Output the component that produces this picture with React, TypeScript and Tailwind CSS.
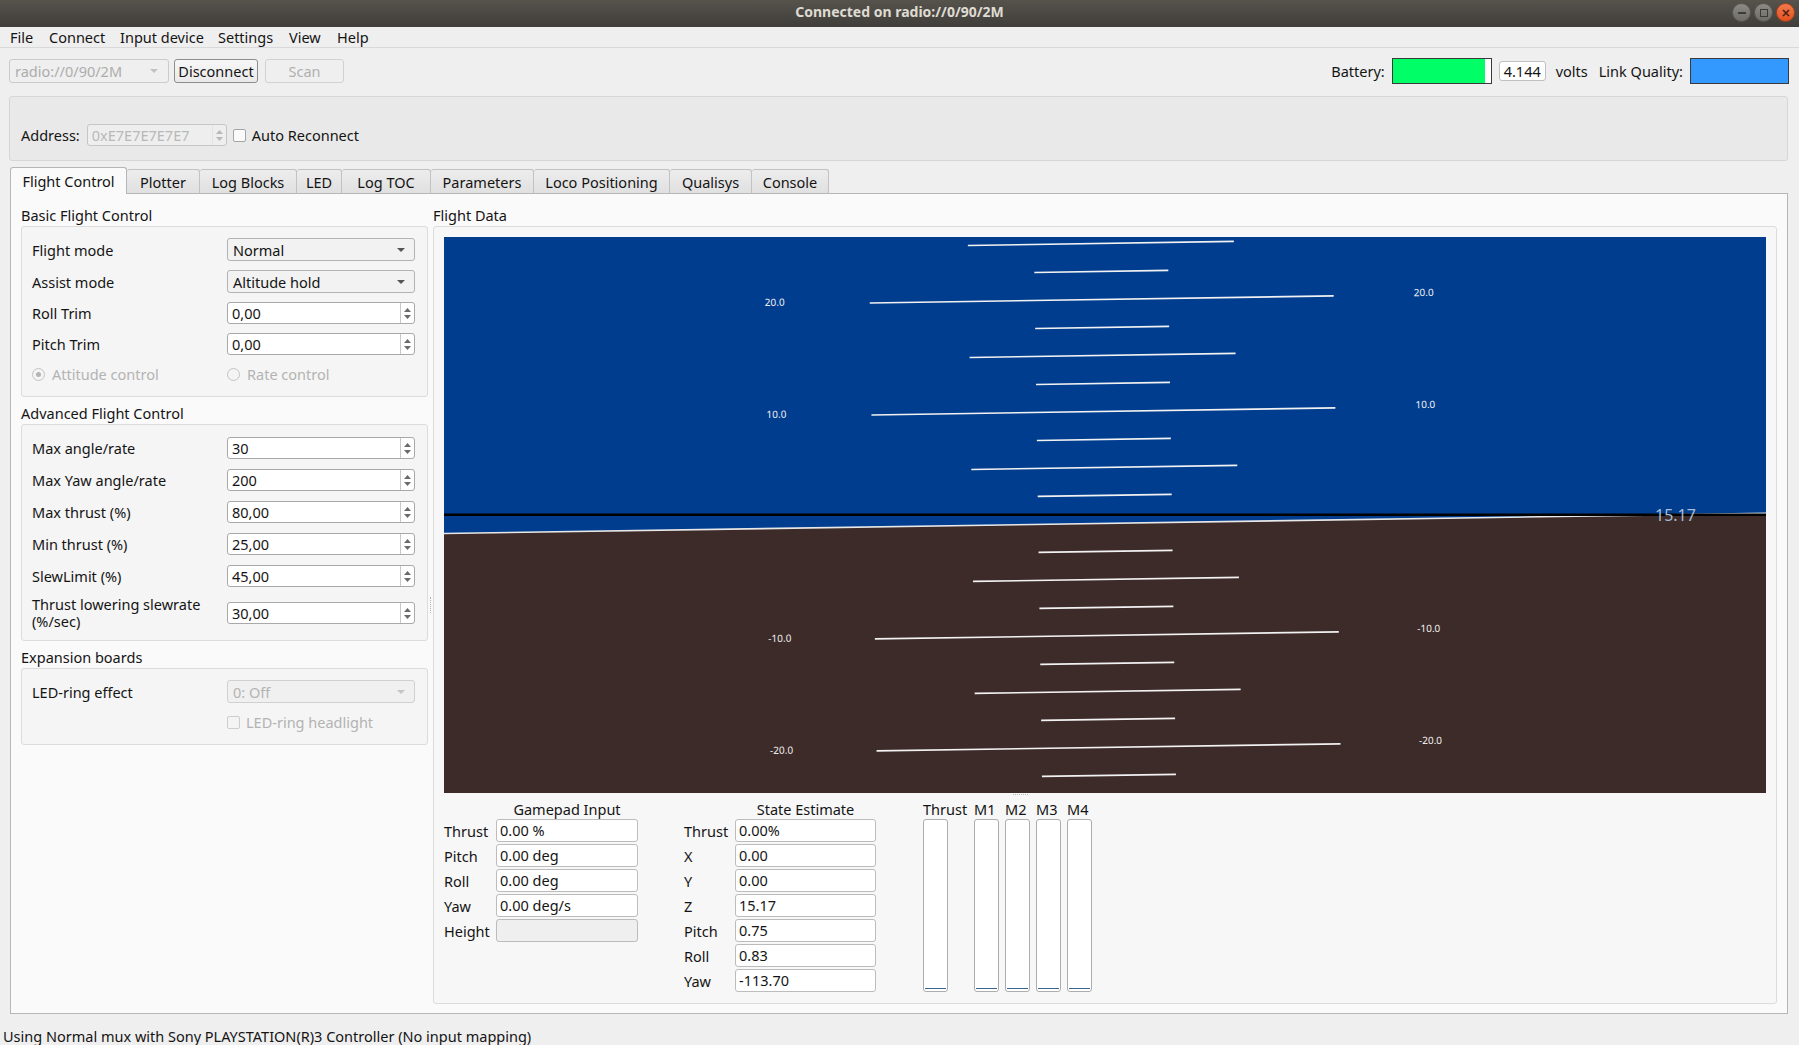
import React from 'react';

const Up = () => (
  <svg width="7" height="4" className="block">
    <path d="M0 4L3.5 0L7 4Z" fill="#6a6a6a" />
  </svg>
);
const Down = () => (
  <svg width="7" height="4" className="block">
    <path d="M0 0L7 0L3.5 4Z" fill="#6a6a6a" />
  </svg>
);

function Spin({ value }: { value: string }) {
  return (
    <div className="flex h-[22px] w-[188px] rounded-[3px] border border-[#a9a9a9] bg-white">
      <div className="flex-1 pl-[4px] leading-[20px]">{value}</div>
      <div className="flex w-[14px] flex-col items-center justify-center gap-[3px] border-l border-[#c8c8c8]">
        <Up />
        <Down />
      </div>
    </div>
  );
}

function Combo({ value, disabled }: { value: string; disabled?: boolean }) {
  return (
    <div
      className={
        disabled
          ? 'flex h-[23px] w-[188px] items-center rounded-[3px] border border-[#d0d0d0] bg-[#f0f0f0] pl-[5px] pr-[9px] text-[#b4b4b4]'
          : 'flex h-[23px] w-[188px] items-center rounded-[3px] border border-[#b3b3b3] bg-[#f2f2f2] pl-[5px] pr-[9px]'
      }
    >
      <span className="flex-1">{value}</span>
      <svg width="8" height="4" className="block">
        <path d="M0 0H8L4 4Z" fill={disabled ? '#c4c4c4' : '#555'} />
      </svg>
    </div>
  );
}

function Row({ label, children }: { label: React.ReactNode; children: React.ReactNode }) {
  return (
    <div className="flex items-center">
      <div className="w-[195px]">{label}</div>
      {children}
    </div>
  );
}

function Horizon() {
  const W = 1322;
  const H = 556;
  const cx = 661;
  const cy = 278;
  const hy = cy + 8.4;
  const ppd = 11.2;
  const items: React.ReactNode[] = [];
  for (let i = -12; i <= 12; i++) {
    const d = i * 2.5;
    if (i === 0) continue;
    const y = hy - d * ppd;
    const long = i % 4 === 0;
    const mid = !long && i % 2 === 0;
    const hw = long ? 232 : mid ? 133 : 67;
    items.push(
      <line key={'l' + i} x1={cx - hw} x2={cx + hw} y1={y} y2={y} stroke="#f2f2f2" strokeWidth="1.6" />
    );
    if (long) {
      const t = d.toFixed(1);
      items.push(
        <text key={'a' + i} x={cx - 327} y={y + 1.5} fill="#f0f0f0" fontSize="10" textAnchor="middle">
          {t}
        </text>,
        <text key={'b' + i} x={cx + 322} y={y + 1.5} fill="#f0f0f0" fontSize="10" textAnchor="middle">
          {t}
        </text>
      );
    }
  }
  return (
    <svg width={W} height={H} className="block font-['Noto_Sans',sans-serif]">
      <defs>
        <clipPath id="hc">
          <rect width={W} height={H} />
        </clipPath>
      </defs>
      <g clipPath="url(#hc)">
        <g transform={`rotate(-0.87 ${cx} ${cy})`}>
          <rect x={-300} y={-400} width={W + 600} height={hy + 400} fill="#003d8f" />
          <rect x={-300} y={hy} width={W + 600} height={H + 400} fill="#3d2b29" />
          <line x1={-300} x2={W + 300} y1={hy} y2={hy} stroke="#e8e8e8" strokeWidth="1.6" />
          {items}
        </g>
        <rect x={0} y={cy - 1.5} width={W} height={2.5} fill="#000" />
        <text x={1211} y={cy + 6} fill="#a9bcd6" fontSize="16">
          15.17
        </text>
      </g>
    </svg>
  );
}

function Field({ value, disabled }: { value: string; disabled?: boolean }) {
  return (
    <div
      className={
        disabled
          ? 'h-[23px] w-full rounded-[3px] border border-[#bcbcbc] bg-[#efefef]'
          : 'h-[23px] w-full rounded-[3px] border border-[#bcbcbc] bg-white pl-[3px] leading-[21px]'
      }
    >
      {value}
    </div>
  );
}

function DataGroup({ title, rows, labelW }: { title: string; rows: [string, string, boolean?][]; labelW: string }) {
  return (
    <div className="flex flex-col">
      <div className="flex h-[18px] items-center">
        <div className={labelW}></div>
        <div className="flex-1 text-center">{title}</div>
      </div>
      <div className="mt-[1px] flex flex-col gap-[2px]">
        {rows.map(([l, v, dis]) => (
          <div key={l} className="flex items-center">
            <div className={labelW}>{l}</div>
            <div className="flex-1">
              <Field value={v} disabled={dis} />
            </div>
          </div>
        ))}
      </div>
    </div>
  );
}

function Bar() {
  return (
    <div className="flex h-[173px] w-[25px] flex-col justify-end rounded-[3px] border border-[#adadad] bg-white px-[1px] pb-[2px]">
      <div className="h-[1px] bg-[#3a6790]"></div>
    </div>
  );
}

const tabs: [string, string][] = [
  ['Flight Control', 'w-[117px]'],
  ['Plotter', 'w-[73px]'],
  ['Log Blocks', 'w-[97px]'],
  ['LED', 'w-[45px]'],
  ['Log TOC', 'w-[89px]'],
  ['Parameters', 'w-[103px]'],
  ['Loco Positioning', 'w-[136px]'],
  ['Qualisys', 'w-[82px]'],
  ['Console', 'w-[77px]'],
];

export default function App() {
  return (
    <div className="flex h-[1045px] w-[1799px] flex-col overflow-hidden bg-[#efefef] font-['Noto_Sans','DejaVu_Sans',sans-serif] text-[14.5px] leading-[18px] text-[#141414]">
      {/* title bar */}
      <div className="relative flex h-[27px] items-center justify-center bg-gradient-to-b from-[#56534d] to-[#403e3a] pb-[3px]">
        <span className="text-[14px] font-bold text-[#dfdbd2]">Connected on radio://0/90/2M</span>
        <div className="absolute right-[4px] top-[3px] flex gap-[3px]">
          <div className="flex h-[19px] w-[19px] items-center justify-center rounded-full border border-[#5a5853] bg-gradient-to-b from-[#8c8a85] to-[#6e6c67]">
            <div className="h-[2px] w-[8px] bg-[#3c3b37]"></div>
          </div>
          <div className="flex h-[19px] w-[19px] items-center justify-center rounded-full border border-[#5a5853] bg-gradient-to-b from-[#8c8a85] to-[#6e6c67]">
            <div className="h-[8px] w-[8px] border-[1.5px] border-[#3c3b37]"></div>
          </div>
          <div className="flex h-[19px] w-[19px] items-center justify-center rounded-full border border-[#a8401c] bg-gradient-to-b from-[#f47a4c] to-[#e2501e]">
            <svg width="8" height="8" className="block">
              <path d="M1 1L7 7M7 1L1 7" stroke="#4a2212" strokeWidth="1.6" />
            </svg>
          </div>
        </div>
      </div>

      {/* menu bar */}
      <div className="flex h-[21px] items-center border-b border-[#d9d9d9] pl-[10px]">
        <span className="w-[39px]">File</span>
        <span className="w-[71px]">Connect</span>
        <span className="w-[98px]">Input device</span>
        <span className="w-[71px]">Settings</span>
        <span className="w-[48px]">View</span>
        <span>Help</span>
      </div>

      {/* toolbar */}
      <div className="mt-[10px] flex h-[26px] items-center pl-[9px] pr-[10px]">
        <div className="flex h-[24px] w-[160px] items-center rounded-[3px] border border-[#cbcbcb] bg-[#efefef] pl-[5px] pr-[10px] text-[#adadad]">
          <span className="flex-1">radio://0/90/2M</span>
          <svg width="8" height="4" className="block">
            <path d="M0 0H8L4 4Z" fill="#c2c2c2" />
          </svg>
        </div>
        <div className="ml-[5px] flex h-[24px] w-[84px] items-center justify-center rounded-[3px] border border-[#8d8d8d] bg-gradient-to-b from-[#f7f7f7] to-[#e9e9e9]">
          Disconnect
        </div>
        <div className="ml-[7px] flex h-[24px] w-[79px] items-center justify-center rounded-[3px] border border-[#d2d2d2] bg-[#efefef] text-[#b0b0b0]">
          Scan
        </div>
        <div className="flex-1"></div>
        <span>Battery:</span>
        <div className="ml-[7px] flex h-[26px] w-[100px] border border-[#3a3a3a] bg-white">
          <div className="h-full w-[92px] bg-[#00ff66]"></div>
        </div>
        <div className="ml-[7px] flex h-[20px] w-[47px] items-center justify-center rounded-[3px] border border-[#c0c0c0] bg-white">
          4.144
        </div>
        <span className="ml-[10px]">volts</span>
        <span className="ml-[11px]">Link Quality:</span>
        <div className="ml-[7px] h-[26px] w-[99px] border border-[#3a3a3a] bg-[#3399ff]"></div>
      </div>

      {/* address group */}
      <div className="ml-[9px] mr-[11px] mt-[12px] flex h-[65px] items-end rounded-[3px] border border-[#d6d6d6] bg-[#e9e9e9] pb-[14px] pl-[11px]">
        <div className="flex items-center">
          <span>Address:</span>
          <div className="ml-[7px] flex h-[22px] w-[140px] rounded-[3px] border border-[#c6c6c6] bg-[#eeeeee] text-[#b8b8b8]">
            <div className="flex-1 pl-[4px] leading-[20px]">0xE7E7E7E7E7</div>
            <div className="flex w-[14px] flex-col items-center justify-center gap-[3px] border-l border-[#d4d4d4] opacity-40">
              <Up />
              <Down />
            </div>
          </div>
          <div className="ml-[6px] h-[13px] w-[13px] rounded-[2px] border border-[#a5a5a5] bg-[#fafafa]"></div>
          <span className="ml-[6px]">Auto Reconnect</span>
        </div>
      </div>

      {/* tabs */}
      <div className="ml-[10px] mt-[8px] flex h-[24px] items-end">
        {tabs.map(([t, w], i) =>
          i === 0 ? (
            <div
              key={t}
              className={`relative z-10 -mb-[1px] flex h-[27px] items-center justify-center rounded-t-[3px] border border-b-0 border-[#b6b6b6] bg-[#fafafa] ${w}`}
            >
              {t}
            </div>
          ) : (
            <div
              key={t}
              className={`flex h-[24px] items-center justify-center rounded-t-[3px] border border-b-0 border-l-0 border-[#c2c2c2] bg-gradient-to-b from-[#ededed] to-[#e0e0e0] ${w}`}
            >
              {t}
            </div>
          )
        )}
      </div>

      {/* tab pane */}
      <div className="ml-[10px] mr-[11px] flex h-[821px] border border-[#b6b6b6] bg-[#fafafa] px-[10px] pt-[12px]">
        {/* left column */}
        <div className="flex w-[407px] flex-col">
          <div className="h-[18px]">Basic Flight Control</div>
          <div className="mt-[2px] flex h-[171px] flex-col gap-[9px] rounded-[3px] border border-[#dcdcdc] bg-[#f5f5f5] pl-[10px] pt-[11px]">
            <Row label="Flight mode">
              <Combo value="Normal" />
            </Row>
            <Row label="Assist mode">
              <Combo value="Altitude hold" />
            </Row>
            <Row label="Roll Trim">
              <Spin value="0,00" />
            </Row>
            <Row label="Pitch Trim">
              <Spin value="0,00" />
            </Row>
            <div className="flex h-[20px] items-center text-[#b3b3b3]">
              <div className="flex w-[195px] items-center">
                <div className="flex h-[13px] w-[13px] items-center justify-center rounded-full border border-[#c4c4c4] bg-[#f4f4f4]">
                  <div className="h-[5px] w-[5px] rounded-full bg-[#b4b4b4]"></div>
                </div>
                <span className="ml-[7px]">Attitude control</span>
              </div>
              <div className="h-[13px] w-[13px] rounded-full border border-[#c4c4c4] bg-[#f4f4f4]"></div>
              <span className="ml-[7px]">Rate control</span>
            </div>
          </div>

          <div className="mt-[7px] h-[18px]">Advanced Flight Control</div>
          <div className="mt-[2px] flex h-[217px] flex-col gap-[10px] rounded-[3px] border border-[#dcdcdc] bg-[#f5f5f5] pl-[10px] pt-[12px]">
            <Row label="Max angle/rate">
              <Spin value="30" />
            </Row>
            <Row label="Max Yaw angle/rate">
              <Spin value="200" />
            </Row>
            <Row label="Max thrust (%)">
              <Spin value="80,00" />
            </Row>
            <Row label="Min thrust (%)">
              <Spin value="25,00" />
            </Row>
            <Row label="SlewLimit (%)">
              <Spin value="45,00" />
            </Row>
            <div className="-mt-[1px] flex items-center">
              <div className="w-[195px] leading-[17px]">
                Thrust lowering slewrate
                <br />
                (%/sec)
              </div>
              <Spin value="30,00" />
            </div>
          </div>

          <div className="mt-[7px] h-[18px]">Expansion boards</div>
          <div className="mt-[2px] flex h-[77px] flex-col gap-[9px] rounded-[3px] border border-[#dcdcdc] bg-[#f5f5f5] pl-[10px] pt-[11px]">
            <Row label="LED-ring effect">
              <Combo value="0: Off" disabled />
            </Row>
            <div className="flex h-[20px] items-center text-[#b3b3b3]">
              <div className="w-[195px]"></div>
              <div className="h-[13px] w-[13px] rounded-[2px] border border-[#cdcdcd] bg-[#f4f4f4]"></div>
              <span className="ml-[6px]">LED-ring headlight</span>
            </div>
          </div>
        </div>

        {/* splitter handle */}
        <div className="flex w-[5px] justify-center pt-[391px]">
          <div className="h-[16px] w-0 border-l border-dotted border-[#b0b0b0]"></div>
        </div>

        {/* right column */}
        <div className="flex flex-1 flex-col">
          <div className="h-[18px]">Flight Data</div>
          <div className="mt-[2px] flex h-[778px] flex-col rounded-[3px] border border-[#dcdcdc] bg-[#f7f7f7] pl-[10px] pt-[10px]">
            <Horizon />
            <div className="flex h-0 justify-center">
              <div className="ml-[-180px] mt-[1px] h-0 w-[15px] border-t border-dotted border-[#b8b8b8]"></div>
            </div>
            <div className="mt-[7px] flex items-start">
              <div className="w-[194px]">
                <DataGroup
                  title="Gamepad Input"
                  labelW="w-[52px]"
                  rows={[
                    ['Thrust', '0.00 %'],
                    ['Pitch', '0.00 deg'],
                    ['Roll', '0.00 deg'],
                    ['Yaw', '0.00 deg/s'],
                    ['Height', '', true],
                  ]}
                />
              </div>
              <div className="ml-[46px] w-[192px]">
                <DataGroup
                  title="State Estimate"
                  labelW="w-[51px]"
                  rows={[
                    ['Thrust', '0.00%'],
                    ['X', '0.00'],
                    ['Y', '0.00'],
                    ['Z', '15.17'],
                    ['Pitch', '0.75'],
                    ['Roll', '0.83'],
                    ['Yaw', '-113.70'],
                  ]}
                />
              </div>
              <div className="ml-[47px] flex">
                <div className="flex w-[44px] flex-col">
                  <div className="h-[18px]">Thrust</div>
                  <div className="mt-[1px]">
                    <Bar />
                  </div>
                </div>
                {['M1', 'M2', 'M3', 'M4'].map((m, i) => (
                  <div key={m} className={i === 0 ? 'ml-[7px] flex w-[25px] flex-col' : 'ml-[6px] flex w-[25px] flex-col'}>
                    <div className="h-[18px]">{m}</div>
                    <div className="mt-[1px]">
                      <Bar />
                    </div>
                  </div>
                ))}
              </div>
            </div>
          </div>
        </div>
      </div>

      {/* status bar */}
      <div className="pl-[3px] pt-[13px]">Using Normal mux with Sony PLAYSTATION(R)3 Controller (No input mapping)</div>
    </div>
  );
}
